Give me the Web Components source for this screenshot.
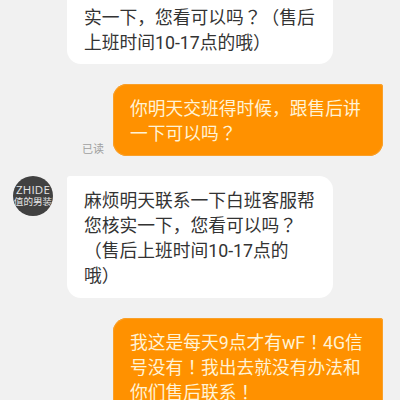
<!DOCTYPE html>
<html lang="zh-CN">
<head>
<meta charset="utf-8">
<style>
html, body { margin: 0; height: 400px; overflow: hidden; background: #f1f1f1; }
</style>
</head>
<body>
<chat-thread>
  <chat-message style="--pad-top: 11.4px; --pad-bottom: 8.2px"><chat-line style="height: 27px">麻烦明天联系一下白班帮您核</chat-line><chat-line>实一下，您看可以吗<full-mark>？</full-mark>（售后</chat-line><chat-line>上班时间10-17点的哦）</chat-line></chat-message>
  <chat-message side="out"><span slot="status">已读</span><chat-line>你明天交班得时候，跟售后讲</chat-line><chat-line>一下可以吗<full-mark>？</full-mark></chat-line></chat-message>
  <chat-message><shop-avatar slot="avatar"></shop-avatar><chat-line>麻烦明天联系一下白班客服帮</chat-line><chat-line>您核实一下，您看可以吗<full-mark>？</full-mark></chat-line><chat-line>（售后上班时间10-17点的</chat-line><chat-line>哦）</chat-line></chat-message>
  <chat-message side="out"><chat-line>我这是每天9点才有wF<full-mark>！</full-mark>4G信</chat-line><chat-line>号没有<full-mark>！</full-mark>我出去就没有办法和</chat-line><chat-line>你们售后联系<full-mark>！</full-mark></chat-line></chat-message>
</chat-thread>
<script>
function define(name, html) {
  customElements.define(name, class extends HTMLElement {
    constructor() {
      super();
      this.attachShadow({ mode: 'open' }).innerHTML = html;
    }
  });
}
define('chat-thread', `<style>
:host { display: flex; flex-direction: column; gap: 20.2px; margin-top: -32.4px; font-family: Roboto, "Noto Sans CJK SC", sans-serif; }
</style><slot></slot>`);
define('chat-line', `<style>
:host { display: block; height: 25px; line-height: 25px; white-space: nowrap; text-spacing-trim: space-all; }
</style><slot></slot>`);
define('full-mark', `<style>
:host { font-family: "Noto Sans CJK TC", sans-serif; line-height: 0; }
</style><span lang="zh-TW"><slot></slot></span>`);
define('chat-message', `<style>
:host { display: grid; grid-template-columns: 53px 266px; column-gap: 14px; align-items: start; }
:host([side="out"]) { grid-template-columns: 104px 270px; column-gap: 9px; }
.bubble { box-sizing: border-box; padding: var(--pad-top, 12.8px) 0 var(--pad-bottom, 8.8px) 17px; border-radius: 3px 14px 14px 14px; background: #fff; color: #333; font-size: 17.75px; }
:host([side="out"]) .bubble { border-radius: 14px 3px 14px 14px; background: #ff9100; color: #fff3d6; box-shadow: inset 0 0 0 1px #f9a02a; }
.side { display: flex; justify-content: flex-end; }
:host([side="out"]) .side { align-self: end; font-size: 11px; line-height: 13px; color: #a0a0a0; }
</style>
<div class="side"><slot name="avatar"></slot><slot name="status"></slot></div>
<div class="bubble"><slot></slot></div>`);
define('shop-avatar', `<style>
:host { display: flex; flex-direction: column; align-items: center; justify-content: center; width: 40px; height: 40px; border-radius: 50%; overflow: hidden; background: #414141; color: #e6e6e6; white-space: nowrap; }
.latin { font: 11.5px/12px "Open Sans", sans-serif; letter-spacing: .2px; }
.cjk { font: 9.6px/12px Roboto, "Noto Sans CJK SC", sans-serif; }
</style><span class="latin">ZHIDE</span><span class="cjk">值的男装</span>`);
</script>
</body>
</html>
